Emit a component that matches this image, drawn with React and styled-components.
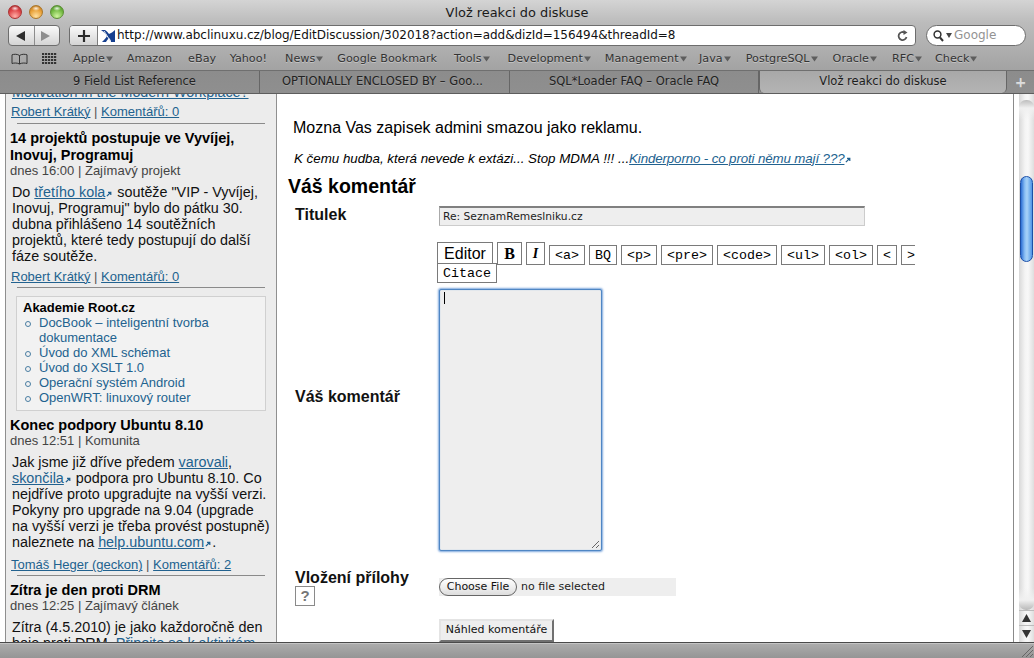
import React from "react";
import styled, { createGlobalStyle } from "styled-components";

const Global = createGlobalStyle`
  html, body { margin: 0; padding: 0; width: 1034px; height: 658px; overflow: hidden; background: #fff; }
  * { box-sizing: border-box; }
`;
const CHROME = `"DejaVu Sans", "Noto Sans", sans-serif`;
const HELV = `"Liberation Sans", Arial, sans-serif`;
const MONO = `"Liberation Mono", monospace`;
const LINK = "#22628f";

const Window = styled.div`
  width: 1034px; height: 658px; display: flex; flex-direction: column; overflow: hidden;
  font-family: ${HELV};
`;
const TopChrome = styled.div`
  height: 71px; flex: none; display: flex; flex-direction: column;
  background: linear-gradient(#d4d4d4 0, #bcbcbc 22px, #b0b0b0 46px, #a2a2a2 71px);
`;
const TitleBar = styled.div`
  height: 24px; flex: none; display: flex; align-items: center; position: relative; padding-left: 8px; gap: 7px;
`;
const Light = styled.span`
  width: 14px; height: 14px; border-radius: 50%; border: 1px solid ${p => p.$edge};
  background:
    radial-gradient(ellipse 4px 2.5px at 50% 20%, rgba(255,255,255,.85) 0, rgba(255,255,255,0) 100%),
    radial-gradient(circle at 50% 85%, ${p => p.$glow} 0, ${p => p.$main} 55%, ${p => p.$dark} 100%);
`;
const Title = styled.div`
  position: absolute; left: 0; right: 0; top: 5px; text-align: center;
  font: 12.9px/15px ${CHROME}; color: #1a1a1a;
`;
const NavRow = styled.div`
  height: 23px; flex: none; display: flex; align-items: flex-start; padding: 1px 8px 0;
`;
const Segmented = styled.div`
  display: flex; height: 21px; width: 52px; border: 1px solid #6d6d6d; border-radius: 4px; overflow: hidden;
  background: linear-gradient(#fafafa, #d4d4d4);
  margin-right: 9px; flex: none;
`;
const NavBtn = styled.div`
  flex: 1; display: flex; align-items: center; justify-content: center;
  & + & { border-left: 1px solid #8d8d8d; }
`;
const UrlGroup = styled.div`
  width: 847px; height: 21px; display: flex; border: 1px solid #6d6d6d; border-radius: 4px; overflow: hidden; flex: none; background: #fff;
`;
const PlusBtn = styled.div`
  width: 28px; flex: none; display: flex; align-items: center; justify-content: center;
  background: linear-gradient(#fafafa, #d4d4d4); border-right: 1px solid #7d7d7d;
`;
const UrlField = styled.div`
  flex: 1; display: flex; align-items: center; padding: 0 6px 0 3px; gap: 2px;
  font: 12px/19px ${CHROME}; color: #111; white-space: nowrap;
`;
const UrlText = styled.span`
  flex: 1; letter-spacing: -0.04px;
`;
const Search = styled.div`
  width: 100px; height: 21px; margin-left: 10px; border: 1px solid #6d6d6d; border-radius: 11px; background: #fff; flex: none;
  display: flex; align-items: center; padding-left: 6px; gap: 2px;
  font: 12px/19px ${CHROME}; color: #939393;
`;
const BookmarkRow = styled.div`
  height: 24px; flex: none; display: flex; align-items: center; padding-left: 11px;
  border-bottom: 1px solid #6f6f6f;
  font: 11.2px/14px ${CHROME}; color: #333; text-shadow: 0 1px 0 rgba(255,255,255,.35); white-space: nowrap;
`;
const BookIcons = styled.div`
  display: flex; align-items: center; gap: 14px; width: 62px; flex: none;
`;
const Bm = styled.span`
  display: inline-flex; align-items: center; margin-right: ${p => p.$gap}px;
`;
const Tabs = styled.div`
  height: 23px; flex: none; display: flex; background: linear-gradient(#8c8c8c, #8f8f8f); border-bottom: 1px solid #5d5d5d;
  font: 11.5px/20px ${CHROME}; color: #222; text-shadow: 0 1px 0 rgba(255,255,255,.18);
`;
const Tab = styled.div`
  width: ${p => p.$w}px; flex: none; text-align: center; white-space: nowrap; overflow: hidden;
  padding: ${p => p.$pad || "0"};
  border-right: 1px solid #666;
  ${p => p.$active ? `
    background: linear-gradient(#a8a8a8, #b4b4b4);
    border-radius: 0 0 5px 5px; border-left: 1px solid #666; color: #1c1c1c;
  ` : ""}
`;
const NewTab = styled.div`
  flex: 1; display: flex; align-items: center; justify-content: center; color: #ddd; font: bold 14px/20px ${CHROME};
`;

const Content = styled.div`
  flex: 1; min-height: 0; display: flex; background: #fff;
`;
const Sidebar = styled.div`
  flex: none; margin-left: 5px; width: 272px; background: #ececec;
  border-left: 1px solid #8f8f8f; border-right: 1px solid #8f8f8f; overflow: hidden;
  font: 14.35px/16px ${HELV}; color: #111;
`;
const SideInner = styled.div`
  margin-top: -10px; padding-left: 4px;
`;
const A = styled.a`
  color: ${LINK}; text-decoration: underline; text-underline-offset: 1px; text-decoration-thickness: 1px;
`;
const SigLink = styled(A)`
  letter-spacing: -0.13px;
`;
const ClippedLine = styled.div`
  padding-left: 2px; height: 16px; white-space: nowrap; line-height: 16px;
`;
const ByLine = styled.div`
  color: #555; height: 16px; margin: ${p => p.$mt || 4}px 0 0 1px; white-space: nowrap; font-size: 13px;
`;
const Rule = styled.div`
  height: 1px; background: #8a8a8a; width: 248px; margin: ${p => p.$mt || 3}px 0 0 7px;
`;
const Story = styled.div`
  margin-top: 6px;
`;
const StoryTitle = styled.div`
  font-weight: bold; font-size: 14.5px; line-height: 17px; color: #000;
`;
const Meta = styled.div`
  font-size: 13px; line-height: 16px; color: #444; margin-top: -1px;
`;
const Body = styled.div`
  margin: 5px 0 0 2px; white-space: nowrap;
`;
const Box = styled.div`
  width: 250px; height: 115px; margin: 8px 0 0 6px; background: #f2f2f2; border: 1px solid #d0d0d0;
  padding: 3px 6px;
  font-size: 13px; line-height: 15px;
`;
const BoxTitle = styled.div`
  font-weight: bold; color: #000;
`;
const BoxList = styled.ul`
  list-style: none; margin: 0; padding: 0 0 0 16px;
`;
const BoxItem = styled.li`
  position: relative; color: ${LINK};
  &::before {
    content: ""; position: absolute; left: -14px; top: 6px; width: 4px; height: 4px;
    border-radius: 50%; border: 1px solid #4a7ea3;
  }
`;

const Main = styled.div`
  flex: 1; min-width: 0; padding: 25px 0 0 11px; overflow: hidden; color: #000;
`;
const Para = styled.div`
  font-size: 16px; line-height: 18px; padding-left: 5px;
`;
const Signature = styled.div`
  font-size: 13.33px; line-height: 16px; font-style: italic; margin-top: 14px; padding-left: 6px; white-space: nowrap;
`;
const H = styled.div`
  font-size: 19.5px; line-height: 24px; font-weight: bold; margin-top: 7px;
`;
const FormGrid = styled.div`
  display: grid; grid-template-columns: 144px 1fr; margin: 8px 0 0 7px;
`;
const Label = styled.div`
  font-size: 16px; line-height: 18px; font-weight: bold; align-self: ${p => p.$align || "center"}; color: #111;
`;
const TextInput = styled.div`
  width: 426px; height: 20px; margin-bottom: 16px; background: #eee;
  border: 1px solid #ccc; border-top: 2px solid #808080; border-left-color: #aaa;
  font: 10.7px/17px ${CHROME}; color: #222; padding-left: 3px;
`;
const EditorCell = styled.div`
  margin-left: -2px;
`;
const EditRow = styled.div`
  display: flex; align-items: flex-end; gap: 4px; width: 478px; overflow: hidden; height: 23px;
`;
const TBtn = styled.div`
  flex: none; width: ${p => p.$w}px; height: ${p => p.$h || 20}px; border: 1px solid #7a7a7a; background: #fff;
  display: flex; align-items: center; justify-content: center; overflow: hidden;
  font: ${p => p.$font || `13.33px ${MONO}`}; color: #000;
`;
const CitaceRow = styled.div`
  margin-top: -2px; position: relative;
`;
const Area = styled.div`
  position: relative; width: 163px; height: 262px; margin: 6px 0 0; background: #eee;
  border: 1px solid #4f86c4; border-radius: 2px; box-shadow: 0 0 2px 1px #7fa9dd, inset 0 0 1px #7fa9dd;
`;
const Caret = styled.div`
  position: absolute; left: 4px; top: 2px; width: 1px; height: 12px; background: #000;
`;
const Grip = styled.svg`
  position: absolute; right: 1px; bottom: 1px;
`;
const AttachLabel = styled.div`
  margin-top: 18px; font-size: 16px; line-height: 18px; font-weight: bold; color: #111;
`;
const Help = styled.div`
  width: 20px; height: 20px; margin-top: -1px; border: 1px solid #8a8a8a; color: #777; font: bold 15px/18px ${HELV}; text-align: center;
`;
const FileRow = styled.div`
  width: 237px; height: 18px; margin-top: 27px; background: #eee; display: flex; align-items: center;
  font: 11px/18px ${CHROME}; color: #222; gap: 4px;
`;
const ChooseBtn = styled.div`
  width: 78px; height: 18px; border: 1px solid #666; border-radius: 9px; background: linear-gradient(#fff, #ececec 60%, #ddd);
  text-align: center; line-height: 16px; color: #111;
`;
const Preview = styled.div`
  grid-column: 2; width: 115px; height: 23px; margin-top: 13px; background: #eee;
  border: 2px solid; border-color: #e4e4e4 #707070 #707070 #e4e4e4;
  font: 11px/18px ${CHROME}; color: #111; text-align: center; white-space: nowrap;
`;

const Divider = styled.div`
  width: 1px; flex: none; background: #8a8a8a;
`;
const Gutter = styled.div`
  width: 20px; flex: none; padding-left: 5px; background: #fff;
`;
const Track = styled.div`
  height: 100%; display: flex; flex-direction: column;
  background: linear-gradient(90deg, #d8d8d8, #f4f4f4 40%, #f8f8f8 60%, #dedede);
`;
const CapTop = styled.div`
  height: 82px; flex: none; padding-top: 6px;
`;
const Cap = styled.div`
  height: 30px; border-radius: 7px 7px 0 0;
  background: linear-gradient(#bdbdbd, #f0f0f0 8px, transparent 20px);
`;
const Thumb = styled.div`
  height: 86px; flex: none; margin: 0 1px; border-radius: 7px; border: 1px solid #1c4fa8;
  background: linear-gradient(90deg, #2d6fd4, #8cc0f5 35%, #a8d2f8 55%, #4f96e6);
`;
const TrackFill = styled.div`
  flex: 1;
`;
const CapBottom = styled.div`
  height: 22px; flex: none; border-radius: 0 0 7px 7px;
  background: linear-gradient(transparent, #f0f0f0 12px, #b8b8b8);
`;
const Arrow = styled.div`
  height: ${p => p.$h}px; flex: none; display: flex; align-items: center; justify-content: center;
  border-top: 1px solid #bcbcbc; padding-right: 1px;
`;
const StatusBar = styled.div`
  height: 16px; flex: none; background: linear-gradient(#adadad, #959595); border-top: 1px solid #4a4a4a;
  display: flex; justify-content: flex-end; align-items: flex-end; box-shadow: inset 0 1px 0 #c4c4c4;
`;
const ExtIcon = styled.svg`
  margin: 0 1px;
`;

const Ext = () => (
  <ExtIcon width="6" height="6" viewBox="0 0 7 7">
    <path d="M1 6 L5 2 M2.4 1.5 H5.6 V4.6" stroke="#1f5f8e" strokeWidth="1.4" fill="none" />
  </ExtIcon>
);
const DropIcon = styled.svg`
  margin-left: 1px;
`;
const Drop = () => (
  <DropIcon width="7" height="6" viewBox="0 0 7 6">
    <path d="M0 0.5 H7 L3.5 5.5 Z" fill="#5d5d5d" />
  </DropIcon>
);

const bookmarks = [
  ["Apple", true, 14], ["Amazon", false, 16], ["eBay", false, 13.5], ["Yahoo!", false, 18],
  ["News", true, 14], ["Google Bookmark", false, 17], ["Tools", true, 18], ["Development", true, 14],
  ["Management", true, 12.5], ["Java", true, 15], ["PostgreSQL", true, 15], ["Oracle", true, 15],
  ["RFC", true, 13], ["Check", true, 0],
];
const toolButtons = [
  ["<a>", 36], ["BQ", 28], ["<p>", 36], ["<pre>", 52], ["<code>", 60], ["<ul>", 44], ["<ol>", 44], ["<", 20], [">", 20],
];

export default function App() {
  return (
    <Window>
      <Global />
      <TopChrome>
        <TitleBar>
          <Light $edge="#a33" $main="#e0484a" $glow="#ffb0a8" $dark="#a01f24" />
          <Light $edge="#a9772a" $main="#e9a23a" $glow="#ffe0a0" $dark="#b36a14" />
          <Light $edge="#5d8f34" $main="#76bb45" $glow="#d0f5a0" $dark="#3e8a20" />
          <Title>Vlož reakci do diskuse</Title>
        </TitleBar>
        <NavRow>
          <Segmented>
            <NavBtn>
              <svg width="11" height="10" viewBox="0 0 11 10"><path d="M0 5 L9 0 V10 Z" fill="#2e2e2e" /></svg>
            </NavBtn>
            <NavBtn>
              <svg width="11" height="10" viewBox="0 0 11 10"><path d="M9 5 L0 0 V10 Z" fill="#8e8e8e" /></svg>
            </NavBtn>
          </Segmented>
          <UrlGroup>
            <PlusBtn>
              <svg width="12" height="12" viewBox="0 0 12 12"><path d="M6 0 V12 M0 6 H12" stroke="#2a2a2a" strokeWidth="2.2" /></svg>
            </PlusBtn>
            <UrlField>
              <svg width="14" height="14" viewBox="0 0 14 14">
                <path d="M0 1 C3 3 5 5 6 7 C5 9 3 11 1 13 L5 13 C6 11 7 10 8 9 C9 10 10 11 10 13 L14 13 L14 1 C12 3 10 4 8 5 C7 4 6 2 4 1 Z" fill="#153f8f" />
                <path d="M3 2 C5 5 7 8 9 12" stroke="#e8edf5" strokeWidth="1" fill="none" />
              </svg>
              <UrlText>http://www.abclinuxu.cz/blog/EditDiscussion/302018?action=add&amp;dizId=156494&amp;threadId=8</UrlText>
              <svg width="12" height="12" viewBox="0 0 12 12">
                <path d="M9.5 7 A4 4 0 1 1 7.5 2.5" stroke="#555" strokeWidth="1.8" fill="none" />
                <path d="M6.5 0 L10.5 2.5 L6.5 5 Z" fill="#555" />
              </svg>
            </UrlField>
          </UrlGroup>
          <Search>
            <svg width="11" height="12" viewBox="0 0 11 12">
              <circle cx="4.5" cy="4.5" r="3.4" stroke="#333" strokeWidth="1.5" fill="none" />
              <path d="M7 7.5 L10 11" stroke="#333" strokeWidth="2" />
            </svg>
            <svg width="6" height="5" viewBox="0 0 6 5"><path d="M0 0 H6 L3 5 Z" fill="#444" /></svg>
            Google
          </Search>
        </NavRow>
        <BookmarkRow>
          <BookIcons>
            <svg width="17" height="12" viewBox="0 0 17 12">
              <path d="M8.5 2.5 C6.5 1 3 1 1 1.8 V10.5 C3 9.8 6.5 9.8 8.5 11 C10.5 9.8 14 9.8 16 10.5 V1.8 C14 1 10.5 1 8.5 2.5 Z M8.5 2.5 V11" stroke="#333" strokeWidth="1" fill="none" />
            </svg>
            <svg width="15" height="11" viewBox="0 0 15 11">
              {[0, 3, 6, 9].flatMap(y => [0, 3, 6, 9, 12].map(x => <rect key={`${x}-${y}`} x={x} y={y} width="2.2" height="2" fill="#333" />))}
            </svg>
          </BookIcons>
          {bookmarks.map(([t, d, g]) => (
            <Bm key={t} $gap={g}>{t}{d && <Drop />}</Bm>
          ))}
        </BookmarkRow>
      </TopChrome>
      <Tabs>
        <Tab $w={260} $pad="0 0 0 10px">9 Field List Reference</Tab>
        <Tab $w={250} $pad="0 4px 0 0">OPTIONALLY ENCLOSED BY – Goo...</Tab>
        <Tab $w={249}>SQL*Loader FAQ – Oracle FAQ</Tab>
        <Tab $w={248} $active>Vlož reakci do diskuse</Tab>
        <NewTab>+</NewTab>
      </Tabs>
      <Content>
        <Sidebar>
          <SideInner>
            <ClippedLine><A>Motivation in the Modern Workplace?</A></ClippedLine>
            <ByLine><A>Robert Krátký</A> | <A>Komentářů: 0</A></ByLine>
            <Rule />
            <Story>
              <StoryTitle>14 projektů postupuje ve Vyvíjej,<br />Inovuj, Programuj</StoryTitle>
              <Meta>dnes 16:00 | Zajímavý projekt</Meta>
              <Body>
                Do <A>třetího kola</A><Ext /> soutěže "VIP - Vyvíjej,<br />
                Inovuj, Programuj" bylo do pátku 30.<br />
                dubna přihlášeno 14 soutěžních<br />
                projektů, které tedy postupují do další<br />
                fáze soutěže.
              </Body>
              <ByLine $mt={5}><A>Robert Krátký</A> | <A>Komentářů: 0</A></ByLine>
              <Rule $mt={2} />
            </Story>
            <Box>
              <BoxTitle>Akademie Root.cz</BoxTitle>
              <BoxList>
                <BoxItem>DocBook – inteligentní tvorba dokumentace</BoxItem>
                <BoxItem>Úvod do XML schémat</BoxItem>
                <BoxItem>Úvod do XSLT 1.0</BoxItem>
                <BoxItem>Operační systém Android</BoxItem>
                <BoxItem>OpenWRT: linuxový router</BoxItem>
              </BoxList>
            </Box>
            <Story>
              <StoryTitle>Konec podpory Ubuntu 8.10</StoryTitle>
              <Meta>dnes 12:51 | Komunita</Meta>
              <Body>
                Jak jsme již dříve předem <A>varovali</A>,<br />
                <A>skončila</A><Ext /> podpora pro Ubuntu 8.10. Co<br />
                nejdříve proto upgradujte na vyšší verzi.<br />
                Pokyny pro upgrade na 9.04 (upgrade<br />
                na vyšší verzi je třeba provést postupně)<br />
                naleznete na <A>help.ubuntu.com</A><Ext />.
              </Body>
              <ByLine $mt={7}><A>Tomáš Heger (geckon)</A> | <A>Komentářů: 2</A></ByLine>
              <Rule $mt={2} />
            </Story>
            <Story>
              <StoryTitle>Zítra je den proti DRM</StoryTitle>
              <Meta>dnes 12:25 | Zajímavý článek</Meta>
              <Body>
                Zítra (4.5.2010) je jako každoročně den<br />
                boje proti DRM. <A>Připojte se k aktivitám</A>
              </Body>
            </Story>
          </SideInner>
        </Sidebar>
        <Main>
          <Para>Mozna Vas zapisek admini smazou jako reklamu.</Para>
          <Signature>K čemu hudba, která nevede k extázi... Stop MDMA !!! ...<SigLink>Kinderporno - co proti němu mají ???</SigLink><Ext /></Signature>
          <H>Váš komentář</H>
          <FormGrid>
            <Label $align="start">Titulek</Label>
            <TextInput>Re: SeznamRemeslniku.cz</TextInput>
            <Label>Váš komentář</Label>
            <div>
              <EditorCell>
                <EditRow>
                  <TBtn $w={56} $h={23} $font={`16px ${HELV}`}>Editor</TBtn>
                  <TBtn $w={25} $h={23} $font={`bold 16px "Liberation Serif", serif`}>B</TBtn>
                  <TBtn $w={19} $h={23} $font={`italic bold 14px "Liberation Serif", serif`}>I</TBtn>
                  {toolButtons.map(([t, w]) => <TBtn key={t} $w={w}>{t}</TBtn>)}
                </EditRow>
                <CitaceRow><TBtn $w={60}>Citace</TBtn></CitaceRow>
              </EditorCell>
              <Area>
                <Caret />
                <Grip width="9" height="9" viewBox="0 0 9 9">
                  <path d="M1 8 L8 1 M5 8 L8 5" stroke="#666" strokeWidth="1" />
                </Grip>
              </Area>
            </div>
            <AttachLabel>
              Vložení přílohy
              <Help>?</Help>
            </AttachLabel>
            <FileRow><ChooseBtn>Choose File</ChooseBtn>no file selected</FileRow>
            <Preview>Náhled komentáře</Preview>
          </FormGrid>
        </Main>
        <Divider />
        <Gutter>
          <Track>
            <CapTop><Cap /></CapTop>
            <Thumb />
            <TrackFill />
            <CapBottom />
            <Arrow $h={15}>
              <svg width="9" height="8" viewBox="0 0 9 8"><path d="M4.5 0 L9 8 H0 Z" fill="#333" /></svg>
            </Arrow>
            <Arrow $h={17}>
              <svg width="9" height="8" viewBox="0 0 9 8"><path d="M4.5 8 L9 0 H0 Z" fill="#333" /></svg>
            </Arrow>
          </Track>
        </Gutter>
      </Content>
      <StatusBar>
        <svg width="12" height="12" viewBox="0 0 12 12">
          <path d="M0 11 L11 0 M4 11 L11 4 M8 11 L11 8" stroke="#666" strokeWidth="1" />
        </svg>
      </StatusBar>
    </Window>
  );
}
